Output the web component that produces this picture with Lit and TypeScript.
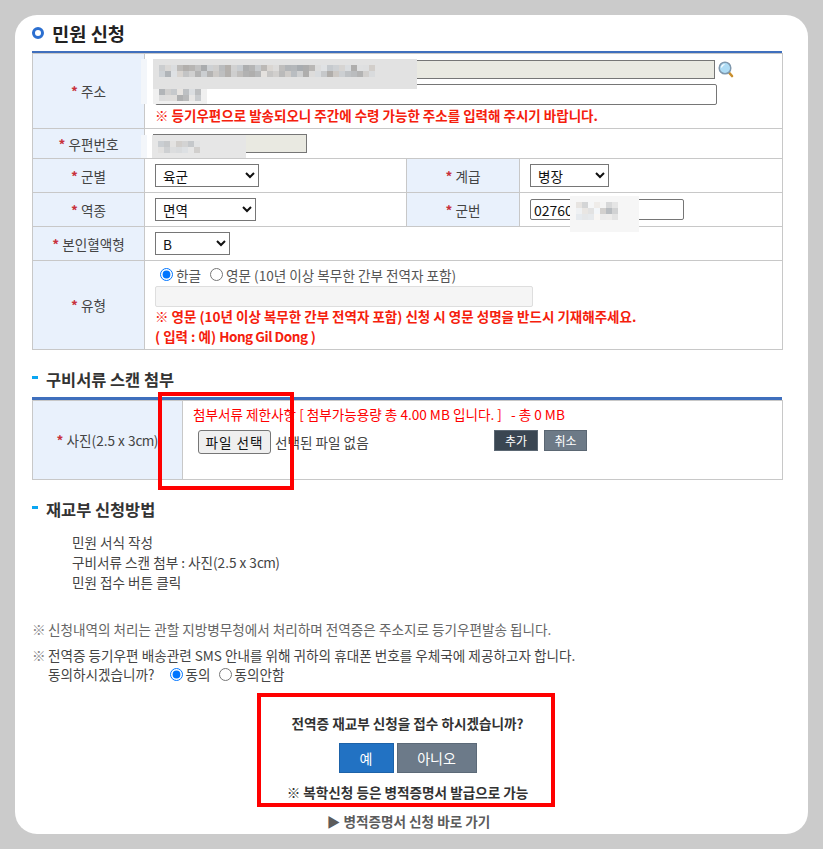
import { LitElement, html, css } from "lit";
import { customElement } from "lit/decorators.js";

function mosaic(cols: number, rows: number, seed: number, strong: number[], from: number, to: number, base: number) {
  let s = seed;
  const next = () => {
    s = (s * 9301 + 49297) % 233280;
    return s / 233280;
  };
  const cells = [];
  for (let r = 0; r < rows; r++) {
    for (let c = 0; c < cols; c++) {
      const st = c >= from && c < to ? strong[r] ?? 0 : 0;
      const v = Math.round(base - next() * st);
      const t = st ? Math.round((next() - 0.5) * 8) : 0;
      cells.push(html`<i style="background:rgb(${v + t},${v},${v - t})"></i>`);
    }
  }
  return html`<div class="mosaic" style="grid-template-columns:repeat(${cols},6px);grid-auto-rows:6px">${cells}</div>`;
}

@customElement("app-root")
export class AppRoot extends LitElement {
  static styles = css`
    :host { display: block; height: 849px; box-sizing: border-box; padding: 15px; background: #cbcbcb; overflow: hidden;
      font-family: "Noto Sans CJK KR", "Noto Sans", sans-serif; font-size: 13.6px; color: #444; }
    .card { position: relative; width: 793px; height: 819px; box-sizing: border-box; padding: 0 26px 0 17px; background: #fff; border-radius: 22px; overflow: hidden; }
    .title { display: flex; align-items: center; gap: 8px; height: 36px; font-size: 18.7px; font-weight: 700; color: #222; line-height: 34px; }
    .ring { width: 12px; height: 12px; box-sizing: border-box; border: 3px solid #2c6fd0; border-radius: 50%; }
    .bar { border-top: 2px solid #3f6fbd; }
    table { width: 750px; border-collapse: collapse; table-layout: fixed; line-height: 18px; }
    td, th { border: 1px solid #c8c8c8; padding: 0 0 0 10px; font-weight: 400; text-align: left; }
    th { background: #e9f1fc; text-align: center; padding: 0; color: #444; font-size: 13.6px; }
    .star { color: #c8323c; font-weight: 700; }
    .h75 { height: 75px; } .h30 { height: 30px; } .h34 { height: 34px; } .h89 { height: 89px; }
    td.addrcell { padding-top: 2px; }
    td.typecell { padding-top: 1px; }
    .addr { display: flex; align-items: center; gap: 3px; }
    input[type="text"] { display: block; box-sizing: border-box; margin: 0; font-family: inherit; font-size: 14px; padding: 0 8px; color: #111; }
    .ro { background: #e9e9e1; border: 1px solid #767676; border-radius: 0; }
    .a1 { width: 560px; height: 19px; }
    .a2 { width: 562px; height: 21px; margin-top: 5px !important; border: 1px solid #767676; border-radius: 2px; }
    .zip { width: 154px; height: 19px; margin-left: -2px !important; }
    .mil { width: 154px; height: 21px; border: 1px solid #767676; border-radius: 2px; padding: 0 8px 0 3px !important; background: #fff; }
    .warn { color: #f5200c; font-weight: 700; font-size: 13.5px; line-height: 20px; }
    .warn.low { margin-top: -1px; }
    .latin { letter-spacing: -.45px; }
    select { display: block; height: 23px; font-family: inherit; font-size: 13.6px; color: #111; background: #fff; padding-left: 3px; }
    .s104 { width: 104px; } .s79 { width: 79px; } .s101 { width: 101px; } .s75 { width: 75px; }
    .radios { display: flex; align-items: center; line-height: 18px; color: #555; padding-left: 5px; }
    .radios input { margin: 0 3px 0 0; }
    .radios label { display: flex; align-items: center; }
    .radios label + label { margin-left: 9px; }
    .eng { width: 378px; height: 21px; margin-top: 2px !important; background: #f5f5f5; border: 1px solid #dedede; border-radius: 2px; }
    .sub { display: flex; align-items: center; gap: 8px; padding-top: 17px; height: 24px; font-size: 16.4px; font-weight: 700; color: #333; line-height: 24px; }
    .sub::before { content: ""; width: 6px; height: 3px; background: #0aa6f2; margin-top: -4px; }
    .sub.bottom { padding-bottom: 6px; }
    .bar2 { border-top: 3px solid #3f6fbd; }
    .bar2 table { border-top: 0; }
    .h79 { height: 79px; }
    .unit { letter-spacing: -.6px; }
    .limit { color: #f00; line-height: 18px; margin-top: -21px; white-space: pre; }
    .filerow { display: flex; align-items: flex-start; margin-top: 7px; padding-left: 5px; }
    .filebtn { width: 73px; height: 24px; box-sizing: border-box; padding: 0; background: #efefef; border: 1px solid #767676; border-radius: 3px; font: inherit; color: #111; letter-spacing: 1px; }
    .nofile { margin: 3px 0 0 4px; width: 95px; color: #444; line-height: 18px; white-space: nowrap; }
    .mini { height: 21px; box-sizing: border-box; border: 1px solid #5b6773; padding: 0; color: #fff; font: inherit; font-size: 12px; }
    .add { width: 44px; margin-left: 124px; background: #3a4652; }
    .cancel { width: 43px; margin-left: 6px; background: #6d7a87; }
    .how { margin: 11px 0 0 40px; line-height: 20px; color: #444; }
    .note { color: #666; line-height: 20px; display: flex; }
    .note.first { margin-top: 27px; }
    .note.second { margin-top: 6px; color: #444; }
    .mark { width: 16px; color: #888; flex: none; }
    .agree { display: flex; align-items: center; line-height: 18px; }
    .agree input { margin: 0 3px 0 0; }
    .agree label { display: flex; align-items: center; }
    .agree .q { margin-right: 15px; }
    .agree label + label { margin-left: 8px; }
    .confirm { width: 298px; height: 114px; box-sizing: border-box; margin: 10px 0 0 225px; padding: 16px 0 0 3px; border: 4px solid #f00; display: flex; flex-direction: column; align-items: center; font-weight: 700; color: #333; line-height: 20px; }
    .btns { display: flex; gap: 3px; margin-top: 10px; }
    .btns button { height: 30px; box-sizing: border-box; color: #fff; font: inherit; font-weight: 400; font-size: 14px; padding: 0; }
    .yes { width: 55px; background: #2272c3; border: 1px solid #1d62a8; }
    .no { width: 80px; background: #6c7a89; border: 1px solid #5c6a78; }
    .tip { margin-top: 9px; }
    .link { width: 750px; margin-top: 4px; text-align: center; padding-left: 3px; box-sizing: border-box; font-weight: 700; color: #5c5c5c; line-height: 20px; }
    .annot { position: absolute; left: 143px; top: 377px; width: 136px; height: 98px; box-sizing: border-box; border: 4px solid #f00; pointer-events: none; }
    .patch { position: absolute; overflow: hidden; }
    .mosaic { display: grid; }
    .mosaic i { display: block; }
    .p1 { left: 138px; top: 44px; width: 264px; height: 30px; }
    .p2 { left: 138px; top: 74px; width: 54px; height: 15px; }
    .p3 { left: 137px; top: 120px; width: 94px; height: 23px; }
    .p4 { left: 555px; top: 181px; width: 69px; height: 36px; }
    .g1 { left: 126px; top: 44px; width: 6px; height: 45px; background: #f3f6fa; }
    .g2 { left: 126px; top: 120px; width: 6px; height: 23px; background: #f3f6fa; }
  `;

  private star() {
    return html`<span class="star">*</span> `;
  }

  private glass() {
    return html`<svg width="16" height="17" viewBox="0 0 16 17" aria-hidden="true">
      <line x1="10.5" y1="11" x2="14" y2="15" stroke="#c98f2e" stroke-width="2.6" stroke-linecap="round"></line>
      <circle cx="7" cy="7" r="5.8" fill="#aedcf5" stroke="#7f98ad" stroke-width="1.5"></circle>
      <path d="M3.5 6.5a3.6 3.6 0 0 1 3-3" fill="none" stroke="#fff" stroke-width="1.2"></path>
    </svg>`;
  }

  render() {
    return html`<div class="card">
      <div class="title"><span class="ring"></span>민원 신청</div>
      <div class="bar">
        <table>
          <colgroup><col style="width:112px" /><col style="width:262px" /><col style="width:113px" /><col style="width:263px" /></colgroup>
          <tr class="h75">
            <th>${this.star()}주소</th>
            <td colspan="3" class="addrcell">
              <div class="addr"><input class="ro a1" type="text" readonly />${this.glass()}</div>
              <input class="a2" type="text" />
              <div class="warn">※ 등기우편으로 발송되오니 주간에 수령 가능한 주소를 입력해 주시기 바랍니다.</div>
            </td>
          </tr>
          <tr class="h30">
            <th>${this.star()}우편번호</th>
            <td colspan="3"><input class="ro zip" type="text" readonly /></td>
          </tr>
          <tr class="h34">
            <th>${this.star()}군별</th>
            <td><select class="s104"><option>육군</option></select></td>
            <th>${this.star()}계급</th>
            <td><select class="s79"><option>병장</option></select></td>
          </tr>
          <tr class="h34">
            <th>${this.star()}역종</th>
            <td><select class="s101"><option>면역</option></select></td>
            <th>${this.star()}군번</th>
            <td><input class="mil" type="text" value="02760" /></td>
          </tr>
          <tr class="h34">
            <th>${this.star()}본인혈액형</th>
            <td colspan="3"><select class="s75"><option>B</option></select></td>
          </tr>
          <tr class="h89">
            <th>${this.star()}유형</th>
            <td colspan="3" class="typecell">
              <div class="radios">
                <label><input type="radio" name="t" checked />한글</label>
                <label><input type="radio" name="t" />영문 (10년 이상 복무한 간부 전역자 포함)</label>
              </div>
              <input class="eng" type="text" />
              <div class="warn low">※ 영문 (10년 이상 복무한 간부 전역자 포함) 신청 시 영문 성명을 반드시 기재해주세요.<br />( 입력 : 예) <span class="latin">Hong Gil Dong</span> )</div>
            </td>
          </tr>
        </table>
      </div>

      <div class="sub bottom">구비서류 스캔 첨부</div>
      <div class="bar2">
        <table>
          <colgroup><col style="width:150px" /><col style="width:600px" /></colgroup>
          <tr class="h79">
            <th>${this.star()}사진(2.5 x 3<span class="unit">cm</span>)</th>
            <td>
              <div class="limit">첨부서류 제한사항 [ 첨부가능용량 총 4.00 MB 입니다. ]   - 총 0 MB</div>
              <div class="filerow">
                <button class="filebtn">파일 선택</button>
                <span class="nofile">선택된 파일 없음</span>
                <button class="mini add">추가</button>
                <button class="mini cancel">취소</button>
              </div>
            </td>
          </tr>
        </table>
      </div>

      <div class="sub">재교부 신청방법</div>
      <div class="how">민원 서식 작성<br />구비서류 스캔 첨부 : 사진(2.5 x 3<span class="unit">cm</span>)<br />민원 접수 버튼 클릭</div>

      <div class="note first"><span class="mark">※</span><span>신청내역의 처리는 관할 지방병무청에서 처리하며 전역증은 주소지로 등기우편발송 됩니다.</span></div>
      <div class="note second"><span class="mark">※</span><div>전역증 등기우편 배송관련 SMS 안내를 위해 귀하의 휴대폰 번호를 우체국에 제공하고자 합니다.
        <div class="agree"><span class="q">동의하시겠습니까?</span>
          <label><input type="radio" name="a" checked />동의</label>
          <label><input type="radio" name="a" />동의안함</label>
        </div>
      </div></div>

      <div class="confirm">
        <div>전역증 재교부 신청을 접수 하시겠습니까?</div>
        <div class="btns"><button class="yes">예</button><button class="no">아니오</button></div>
        <div class="tip">※ 복학신청 등은 병적증명서 발급으로 가능</div>
      </div>
      <div class="link">▶ 병적증명서 신청 바로 가기</div>

      <div class="annot"></div>
      <div class="patch g1"></div>
      <div class="patch g2"></div>
      <div class="patch p1">${mosaic(44, 5, 17, [0, 55, 55, 0, 0], 1, 37, 226)}</div>
      <div class="patch p2">${mosaic(9, 3, 41, [60, 70, 0], 1, 8, 240)}</div>
      <div class="patch p3">${mosaic(16, 4, 73, [0, 35, 30, 0], 1, 8, 230)}</div>
      <div class="patch p4">${mosaic(12, 6, 29, [0, 35, 60, 20, 0, 0], 1, 8, 246)}</div>
    </div>`;
  }
}
